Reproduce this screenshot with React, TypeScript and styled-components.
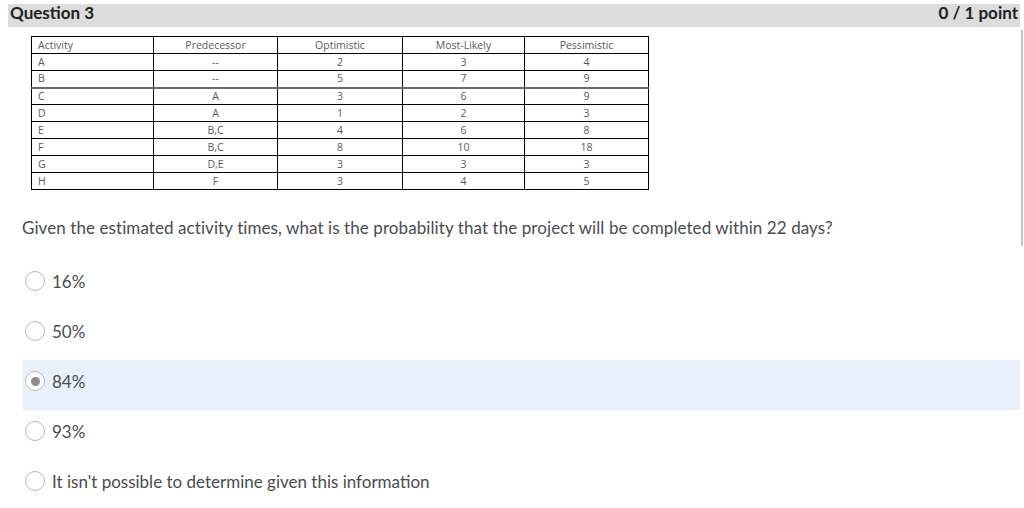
import React from "react";
import styled, { createGlobalStyle } from "styled-components";

const Global = createGlobalStyle`
  html, body { margin: 0; padding: 0; background: #ffffff; }
  body { font-family: Lato, "Noto Sans", sans-serif; color: #494c4e; overflow: hidden; }
`;

const Page = styled.div`
  width: 1024px;
  height: 508px;
  position: relative;
  padding-top: 4px;
  box-sizing: border-box;
`;

const Header = styled.div`
  margin-left: 8px;
  width: 1012px;
  height: 23px;
  background: #dcdcdc;
  display: flex;
  align-items: flex-start;
  justify-content: space-between;
  padding: 0 2px 0 2px;
  box-sizing: border-box;
  font-family: Lato, sans-serif;
  font-weight: 700;
  color: #202122;
`;

const HeaderTitle = styled.span`
  font-size: 17px;
  line-height: 17px;
`;

const Points = styled.span`
  font-size: 17px;
  line-height: 17px;
`;

const Body = styled.div`
  padding-left: 22px;
`;

const Table = styled.table`
  margin-top: 9px;
  margin-left: 9px;
  border-collapse: collapse;
  font-family: "Open Sans", "Liberation Sans", sans-serif;
  font-size: 10.5px;
  color: #5a5a5a;
`;

const Row = styled.tr<{ $thick?: boolean }>`
  height: 17px;
  td {
    border-top: ${(p) => (p.$thick ? "2px solid #6b6b6b" : "1px solid #000")};
  }
`;

const Cell = styled.td<{ $left?: boolean; $w: number }>`
  border: 1px solid #000;
  width: ${(p) => p.$w}px;
  padding: 0;
  padding-left: ${(p) => (p.$left ? "6px" : "0")};
  text-align: ${(p) => (p.$left ? "left" : "center")};
  font-weight: 400;
  line-height: 15px;
  box-sizing: border-box;
  vertical-align: middle;
`;

const Question = styled.p`
  margin: 26px 0 0 0;
  font-size: 17px;
  letter-spacing: 0.08px;
  font-weight: 400;
  line-height: 24px;
  color: #494c4e;
`;

const Options = styled.div`
  display: flex;
  flex-direction: column;
  margin-top: 20px;
  padding-left: 23px;
`;

const Option = styled.label<{ $selected?: boolean }>`
  height: 50px;
  display: flex;
  align-items: center;
  gap: 7px;
  padding: 0 0 8px 2px;
  width: 997px;
  box-sizing: border-box;
  background: ${(p) => (p.$selected ? "#e8f1fb" : "transparent")};
  font-size: 17px;
  color: #494c4e;
`;

const Radio = styled.span<{ $checked?: boolean }>`
  width: 20px;
  height: 20px;
  border-radius: 50%;
  border: 1px solid #b9b9b9;
  background: #ffffff;
  box-sizing: border-box;
  display: flex;
  align-items: center;
  justify-content: center;
  flex-shrink: 0;
  &::after {
    content: "";
    display: ${(p) => (p.$checked ? "block" : "none")};
    width: 9px;
    height: 9px;
    border-radius: 50%;
    background: #8c8c8c;
  }
`;

const ScrollThumb = styled.div`
  position: absolute;
  right: 1px;
  top: 30px;
  width: 2px;
  height: 216px;
  background: #c4c4c4;
`;

const widths = [122, 124, 125, 122, 124];

const rows = [
  ["A", "--", "2", "3", "4"],
  ["B", "--", "5", "7", "9"],
  ["C", "A", "3", "6", "9"],
  ["D", "A", "1", "2", "3"],
  ["E", "B,C", "4", "6", "8"],
  ["F", "B,C", "8", "10", "18"],
  ["G", "D,E", "3", "3", "3"],
  ["H", "F", "3", "4", "5"],
];

const options = ["16%", "50%", "84%", "93%", "It isn't possible to determine given this information"];

export default function App() {
  return (
    <>
      <Global />
      <Page>
        <Header>
          <HeaderTitle>Question 3</HeaderTitle>
          <Points>0 / 1 point</Points>
        </Header>
        <Body>
          <Table>
            <tbody>
              <Row>
                {["Activity", "Predecessor", "Optimistic", "Most-Likely", "Pessimistic"].map((h, i) => (
                  <Cell key={h} $w={widths[i]} $left={i === 0}>
                    {h}
                  </Cell>
                ))}
              </Row>
              {rows.map((r, ri) => (
                <Row key={r[0]} $thick={ri === 2}>
                  {r.map((c, i) => (
                    <Cell key={i} $w={widths[i]} $left={i === 0}>
                      {c}
                    </Cell>
                  ))}
                </Row>
              ))}
            </tbody>
          </Table>
          <Question>
            Given the estimated activity times, what is the probability that the project will be completed within 22 days?
          </Question>
        </Body>
        <Options>
          {options.map((o, i) => (
            <Option key={o} $selected={i === 2}>
              <Radio $checked={i === 2} />
              <span>{o}</span>
            </Option>
          ))}
        </Options>
        <ScrollThumb />
      </Page>
    </>
  );
}
